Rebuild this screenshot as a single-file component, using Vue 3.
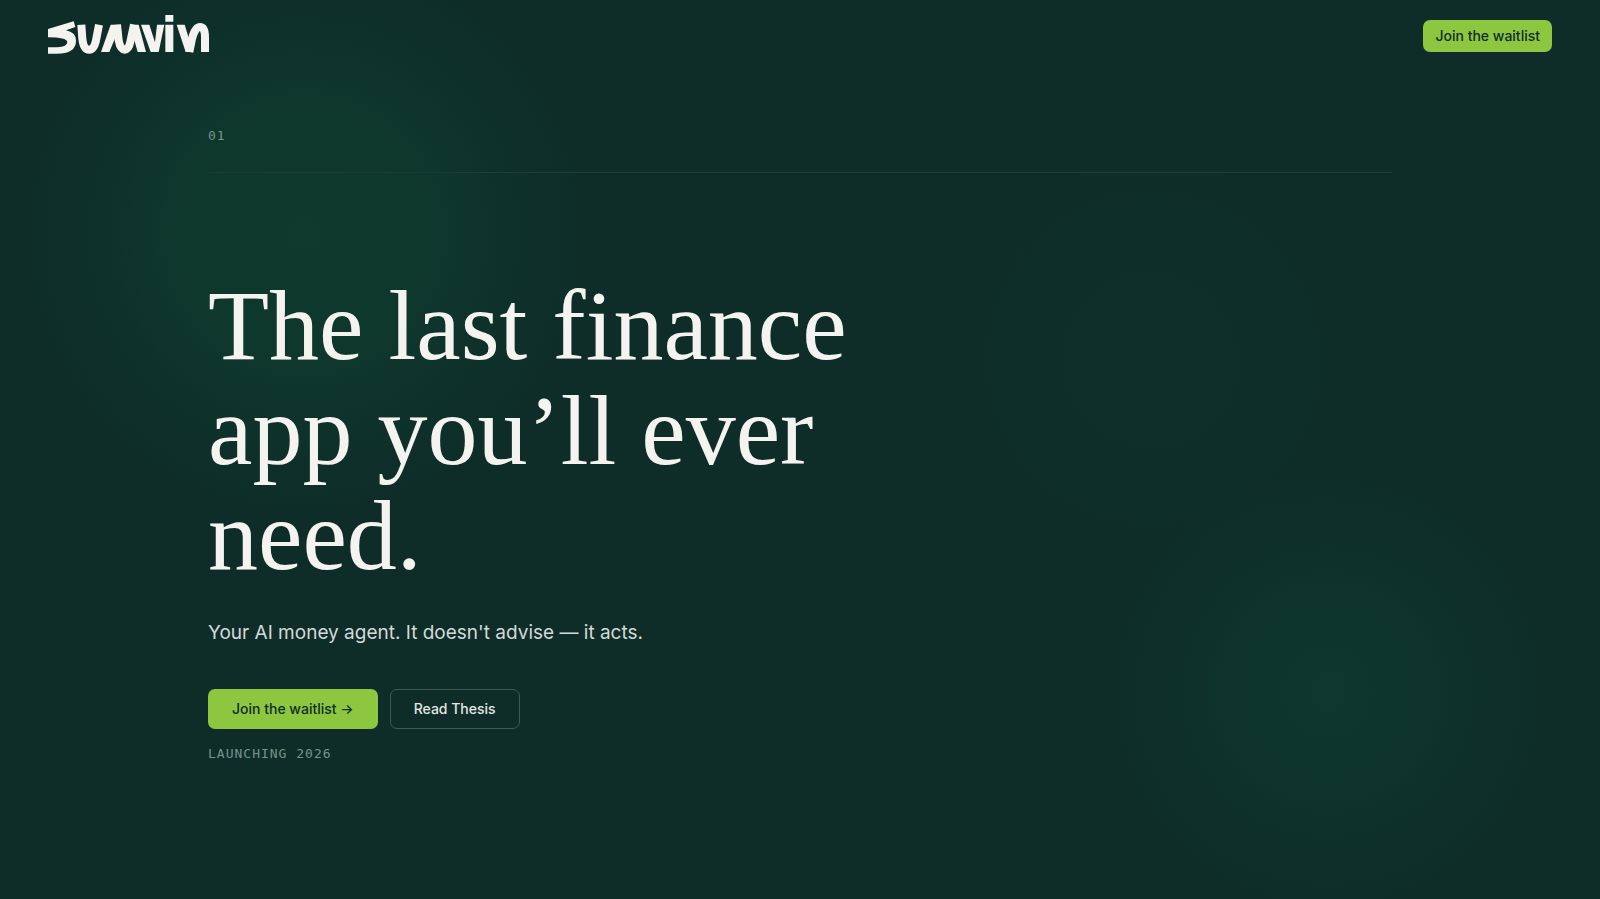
<script setup>
</script>

<template>
  <div class="page">
    <header class="nav">
      <a class="brand" href="#" aria-label="sumvin">
        <svg class="logo" viewBox="24 21 486 117" aria-hidden="true">
          <path d="M24 63L101 40L106 57L78 67Q108 73 108 98Q108 137 50 137H24V118H52Q82 116 82 102Q80 88 24 88Z" />
          <g class="curve">
            <path d="M124 50L127 92Q131 125 147 125Q163 125 169 92L177 50" />
            <path d="M231 50L236 97Q241 125 254 125Q267 125 272 97L282 50" />
            <path d="M448 132L456 92Q465 57 480 57Q495 57 495 88V132" />
          </g>
          <path d="M183 132L212 50H242L208 132Z" />
          <path d="M270 50H296L318 132H293Z" />
          <path d="M303 50H328L345 103L351 50H373L356 132H332Z" />
          <path d="M376 21H400V41H376ZM376 50H400V132H376Z" />
          <path d="M410 50H434L459 132H437Z" />
        </svg>
      </a>
      <a class="btn btn-primary btn-small" href="#waitlist">Join the waitlist</a>
    </header>

    <main class="container">
      <div class="marker">01</div>
      <section class="hero">
        <h1>The last finance app you’ll ever need.</h1>
        <p class="lead">Your AI money agent. It doesn't advise — it acts.</p>
        <div class="actions">
          <a class="btn btn-primary" href="#waitlist">Join the waitlist →</a>
          <a class="btn btn-outline" href="#thesis">Read Thesis</a>
        </div>
        <p class="note">LAUNCHING 2026</p>
      </section>
    </main>
  </div>
</template>

<style>
body {
  margin: 0;
  background: #0e2d29;
}
</style>

<style scoped>
.page {
  min-height: 100vh;
  box-sizing: border-box;
  font-family: "Inter", "Liberation Sans", sans-serif;
  color: #f5f3f0;
  background:
    radial-gradient(circle at 19% 26%, rgba(15, 58, 45, 1) 0, rgba(15, 58, 45, 0.8) 130px, rgba(15, 58, 45, 0.3) 210px, rgba(15, 58, 45, 0) 280px),
    radial-gradient(circle at 83% 77%, rgba(14, 55, 45, 1) 0, rgba(14, 55, 45, 0.7) 100px, rgba(14, 55, 45, 0.25) 160px, rgba(14, 55, 45, 0) 220px),
    radial-gradient(circle at 72% 40%, rgba(14, 50, 44, 0.4) 0, rgba(14, 50, 44, 0) 210px),
    #0e2d29;
}

.nav {
  display: flex;
  align-items: center;
  justify-content: space-between;
  height: 72px;
  padding: 0 48px;
}

.brand {
  display: block;
}

.logo {
  display: block;
  width: 162px;
  height: 39px;
  margin-bottom: 4px;
  fill: #f5f3f0;
}

.curve {
  fill: none;
  stroke: #f5f3f0;
  stroke-width: 24;
}

.container {
  max-width: 1184px;
  margin: 0 auto;
  padding: 56px 48px 0;
}

.marker,
.note {
  font-family: "DejaVu Sans Mono", monospace;
  font-size: 13px;
  line-height: 16px;
  letter-spacing: 1px;
  color: #78938c;
}

.marker {
  padding-bottom: 28px;
  border-bottom: 1px solid #1a3d36;
}

.hero {
  padding-top: 100px;
}

h1 {
  max-width: 720px;
  margin: 0;
  font-family: "Liberation Serif", serif;
  font-size: 100px;
  line-height: 105px;
  font-weight: 400;
}

.lead {
  margin: 29px 0 40px;
  font-size: 19px;
  line-height: 32px;
  color: #d3dad7;
}

.actions {
  display: flex;
  gap: 12px;
}

.btn {
  box-sizing: border-box;
  height: 40px;
  padding: 0 23px;
  border: 1px solid transparent;
  border-radius: 7px;
  font-size: 14px;
  line-height: 38px;
  font-weight: 500;
  text-decoration: none;
  white-space: nowrap;
}

.btn-primary {
  background: #8dc63f;
  color: #0f2d2a;
}

.btn-small {
  height: 32px;
  padding: 0 11px;
  line-height: 30px;
}

.btn-outline {
  border-color: #3d5954;
  color: #e4e7e4;
}

.note {
  margin: 17px 0 0;
}
</style>
